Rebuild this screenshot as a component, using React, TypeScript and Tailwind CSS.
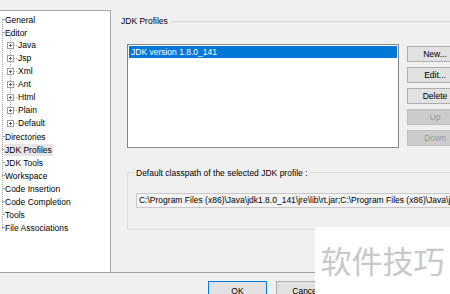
const font = { fontFamily: '"Liberation Sans", Arial, sans-serif' };

const editorChildren = ["Java", "Jsp", "Xml", "Ant", "Html", "Plain", "Default"];
const rootsAfter = ["Directories", "JDK Profiles", "JDK Tools", "Workspace", "Code Insertion", "Code Completion", "Tools", "File Associations"];

const PlusBox = () => (
  <svg width="7" height="7" viewBox="0 0 7 7" className="shrink-0">
    <rect x="0.5" y="0.5" width="6" height="6" fill="white" stroke="#a0a0a0" />
    <path d="M2 3.5h3M3.5 2v3" stroke="#606060" strokeWidth="1" />
  </svg>
);

const RootRow = ({ label, selected }: { label: string; selected?: boolean }) => (
  <div className="flex items-center h-[13px]">
    <span className="w-[2px] border-t border-dotted border-[#a0a0a0]" />
    <span className={`px-[1px] leading-[12px] whitespace-nowrap ${selected ? "bg-[#e5e5e5]" : ""}`}>{label}</span>
  </div>
);

const Tree = () => (
  <div className="w-[111px] h-full shrink-0 bg-white border-t border-r border-[#a5a5a5] pt-[2px] overflow-hidden">
    <div className="relative ml-[2px] w-fit pr-2">
      <div className="absolute left-0 top-[6px] h-[210px] border-l border-dotted border-[#a0a0a0]" />
      <RootRow label="General" />
      <RootRow label="Editor" />
      <div className="relative ml-[8px]">
        <div className="absolute left-0 -top-[6px] h-[84px] border-l border-dotted border-[#a0a0a0]" />
        {editorChildren.map((c) => (
          <div key={c} className="relative flex items-center h-[13px] -ml-[3px]">
            <PlusBox />
            <span className="w-[3px] border-t border-dotted border-[#a0a0a0]" />
            <span className="pl-[1px]">{c}</span>
          </div>
        ))}
      </div>
      {rootsAfter.map((r) => (
        <RootRow key={r} label={r} selected={r === "JDK Profiles"} />
      ))}
    </div>
  </div>
);

const SideButton = ({ label, disabled }: { label: string; disabled?: boolean }) => (
  <div
    className={`w-[56px] h-[16px] flex items-center justify-center border ${
      disabled ? "bg-[#cccccc] border-[#bfbfbf] text-[#9a9a9a]" : "bg-[#e1e1e1] border-[#adadad] text-black"
    }`}
  >
    {label}
  </div>
);

export default function App() {
  return (
    <div className="relative w-[450px] h-[294px] overflow-hidden bg-[#f0f0f0] text-[8.5px] text-black" style={font}>
      <div className="flex h-[273px] pt-[10px] border-b border-[#a0a0a0]">
        <Tree />

        <div className="flex-1 flex flex-col pl-[10px]">
          {/* JDK Profiles group */}
          <div className="mt-[5px] h-[12px] flex items-center">
            <span>JDK Profiles</span>
            <span className="flex-1 ml-[3px] h-px bg-[#d5d5d5]" />
          </div>

          <div className="flex gap-[8px] mt-[17px] ml-[6px]">
            <div className="w-[272px] h-[104px] shrink-0 border border-[#828790] bg-white p-[1px]">
              <div className="h-[12px] bg-[#0078d7] text-white pl-[2px] leading-[12px] whitespace-nowrap">
                JDK version 1.8.0_141
              </div>
            </div>
            <div className="flex flex-col gap-[5px] pt-[2px] shrink-0">
              <SideButton label="New..." />
              <SideButton label="Edit..." />
              <SideButton label="Delete" />
              <SideButton label="Up" disabled />
              <SideButton label="Down" disabled />
            </div>
          </div>

          {/* Default classpath group */}
          <div className="mt-[24px] ml-[6px] w-[340px] h-[58px] shrink-0 border border-[#dcdcdc] rounded-[2px]">
            <div className="-mt-[6px] ml-[7px] w-fit bg-[#f0f0f0] px-[1px] h-[12px] leading-[12px] whitespace-nowrap">
              Default classpath of the selected JDK profile :
            </div>
            <div className="mt-[14px] ml-[8px] w-[330px] h-[15px] border border-[#c8c8c8] bg-[#f3f3f3] pl-[2px] leading-[13px] whitespace-nowrap overflow-hidden">
              C:\Program Files (x86)\Java\jdk1.8.0_141\jre\lib\rt.jar;C:\Program Files (x86)\Java\jdk1.8.0_141\jre\lib\ext
            </div>
          </div>
        </div>
      </div>

      <div className="flex gap-[9px] pl-[208px] pt-[8px]">
        <div className="w-[59px] h-[20px] flex items-center justify-center bg-[#e1e1e1] border border-[#0078d7] shrink-0">OK</div>
        <div className="w-[59px] h-[20px] flex items-center justify-center bg-[#e1e1e1] border border-[#adadad] shrink-0">Cancel</div>
      </div>

      {/* watermark */}
      <div
        className="absolute left-[315px] top-[227px] w-[135px] h-[67px] bg-white flex items-center justify-center text-[31px] text-[#c8c8c8]"
        style={{ fontFamily: '"Noto Sans CJK SC", sans-serif' }}
      >
        软件技巧
      </div>
    </div>
  );
}
